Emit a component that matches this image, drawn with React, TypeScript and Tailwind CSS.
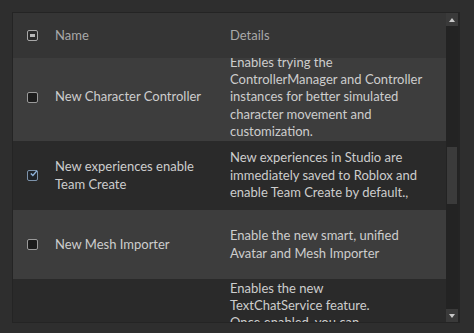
import React from "react";

type Row = {
  name: string;
  details: string[];
  state: "off" | "on";
};

const rows: Row[] = [
  {
    name: "New Character Controller",
    details: [
      "Enables trying the ControllerManager and Controller instances for better simulated character movement and customization.",
    ],
    state: "off",
  },
  {
    name: "New experiences enable Team Create",
    details: [
      "New experiences in Studio are immediately saved to Roblox and enable Team Create by default.,",
    ],
    state: "on",
  },
  {
    name: "New Mesh Importer",
    details: ["Enable the new smart, unified Avatar and Mesh Importer"],
    state: "off",
  },
  {
    name: "",
    details: [
      "Enables the new",
      "TextChatService feature.",
      "Once enabled, you can",
      "use the new chat system.",
    ],
    state: "off",
  },
];

function Checkbox({ state }: { state: "off" | "on" | "mixed" }) {
  if (state === "mixed") {
    return (
      <div className="w-[11px] h-[11px] rounded-[2px] border-[1.5px] border-[#a8a8a8] bg-[#2a2a2a] flex items-center justify-center">
        <div className="w-[5px] h-[3px] bg-[#b8b8b8]" />
      </div>
    );
  }
  if (state === "on") {
    return (
      <div className="w-[11px] h-[11px] rounded-[2px] border-[1.5px] border-[#7d93ab] bg-[#1f2328] relative">
        <svg viewBox="0 0 10 10" className="absolute -top-[2px] left-[1px] w-[9px] h-[9px]">
          <path d="M2 5 L4.3 7.2 L9 1.8" fill="none" stroke="#8fb4dc" strokeWidth="1.6" />
        </svg>
      </div>
    );
  }
  return <div className="w-[11px] h-[11px] rounded-[2px] border-[1.5px] border-[#9a9a9a] bg-[#1c1c1c]" />;
}

export default function App() {
  return (
    <div
      className="w-[474px] h-[333px] bg-[#2e2e2e] pt-[12px] pl-[12px] overflow-hidden"
      style={{ fontFamily: "Lato, 'Noto Sans', sans-serif" }}
    >
      <div className="w-[448px] h-[311px] flex border-l border-t border-b border-r-2 border-[#242424]">
        {/* table */}
        <div className="flex-1 flex flex-col min-w-0">
          <div className="h-[45px] shrink-0 flex items-center bg-[#353535] text-[13px] text-[#a9a9a9]">
            <div className="w-[42px] pl-[14px] -mt-[1px]">
              <Checkbox state="mixed" />
            </div>
            <div className="w-[175px]">Name</div>
            <div className="flex-1">Details</div>
          </div>
          <div className="flex-1 overflow-hidden">
            <div className="-mt-[5px]">
              {rows.map((r, i) => (
                <div
                  key={i}
                  className={`flex items-center min-h-[69px] py-[0.5px] text-[13px] leading-[17.4px] text-[#cdcdcd] ${
                    i % 2 === 0 ? "bg-[#3d3d3d]" : "bg-[#2a2a2a]"
                  }`}
                >
                  <div className="w-[42px] pl-[14px] shrink-0">
                    {r.name && <Checkbox state={r.state} />}
                  </div>
                  <div className="w-[175px] shrink-0 pr-[12px]">{r.name}</div>
                  <div className="flex-1 pr-[10px]">
                    {r.details.map((d, j) => (
                      <div key={j}>{d}</div>
                    ))}
                  </div>
                </div>
              ))}
            </div>
          </div>
        </div>
        {/* scrollbar */}
        <div className="w-[12px] flex flex-col bg-[#232323]">
          <div className="h-[13px] bg-[#3a3a3a] flex items-center justify-center">
            <div className="w-0 h-0 border-l-[3.5px] border-r-[3.5px] border-b-[4px] border-l-transparent border-r-transparent border-b-[#c8c8c8]" />
          </div>
          <div className="flex-1 relative">
            <div className="absolute left-[1px] right-[1px] top-[121px] h-[57px] bg-[#3b3b3b]" />
          </div>
          <div className="h-[13px] bg-[#3a3a3a] flex items-center justify-center">
            <div className="w-0 h-0 border-l-[3.5px] border-r-[3.5px] border-t-[4px] border-l-transparent border-r-transparent border-t-[#c8c8c8]" />
          </div>
        </div>
      </div>
    </div>
  );
}
